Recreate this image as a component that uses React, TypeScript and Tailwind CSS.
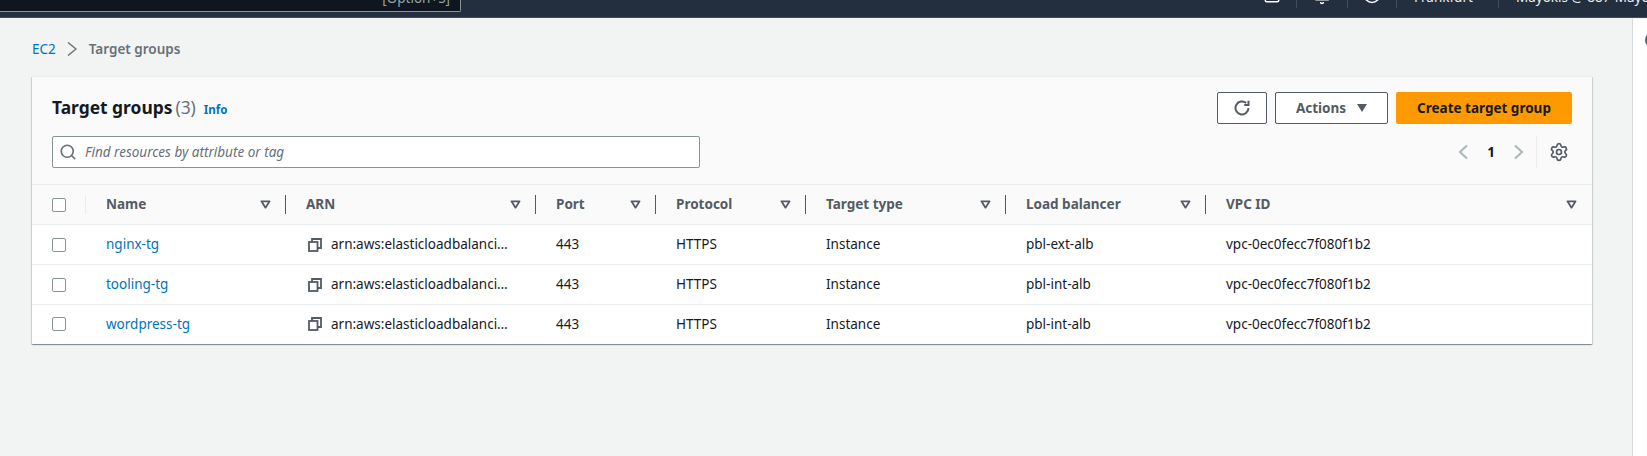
import { Bell, CircleHelp, Search, Settings, SquareTerminal } from "lucide-react";

interface TargetGroup {
  name: string;
  loadBalancer: string;
}

const targetGroups: TargetGroup[] = [
  { name: "nginx-tg", loadBalancer: "pbl-ext-alb" },
  { name: "tooling-tg", loadBalancer: "pbl-int-alb" },
  { name: "wordpress-tg", loadBalancer: "pbl-int-alb" },
];

const columns = ["Name", "ARN", "Port", "Protocol", "Target type", "Load balancer"];

function SortIcon() {
  return (
    <svg width="11" height="9" viewBox="0 0 12 10" fill="none" className="shrink-0">
      <path d="M1.5 1.5h9L6 8.5z" stroke="#545b64" strokeWidth="2" strokeLinejoin="round" />
    </svg>
  );
}

function CopyIcon() {
  return (
    <svg width="14" height="14" viewBox="0 0 14 14" fill="none" className="shrink-0" stroke="#545b64" strokeWidth="1.8">
      <rect x="1" y="4" width="8.5" height="9" />
      <path d="M4 4V1h9v9H9.5" />
    </svg>
  );
}

function Chevron({ flip }: { flip?: boolean }) {
  return (
    <svg width="10" height="16" viewBox="0 0 10 16" fill="none" className={flip ? "rotate-180" : ""}>
      <path d="M9 1.5 2 8l7 6.5" stroke="#aab7b8" strokeWidth="2" />
    </svg>
  );
}

function Checkbox() {
  return <div className="h-[14px] w-[14px] rounded-[2px] border border-[#879596] bg-white" />;
}

function TopBar() {
  return (
    <header className="flex h-[18px] justify-between overflow-hidden border-b border-[#414d5c] bg-[#232f3e] text-[13.5px] text-[#eaeded]">
      <div className="flex h-[12px] w-[461px] justify-end overflow-hidden rounded-br-[2px] border-r border-b border-[#879596] bg-[#0f1620] pr-[10px] text-[#95a5a6]">
        <span className="-mt-[12px] leading-5">[Option+S]</span>
      </div>
      <div className="flex">
        <div className="flex h-[8px] w-[50px] justify-center border-r border-[#414d5c]">
          <SquareTerminal size={18} className="-mt-[14px] text-white" />
        </div>
        <div className="flex h-[8px] w-[51px] justify-center border-r border-[#414d5c]">
          <Bell size={18} className="-mt-[13px] text-white" />
        </div>
        <div className="flex h-[8px] w-[49px] justify-center border-r border-[#414d5c]">
          <CircleHelp size={18} className="-mt-[14px] text-white" />
        </div>
        <div className="h-[8px] w-[102px] border-r border-[#414d5c] pl-[17px]">
          <div className="-mt-[13px] leading-5">Frankfurt</div>
        </div>
        <div className="h-[8px] w-[148px] pl-[17px]">
          <div className="-mt-[13px] leading-5 whitespace-nowrap">Mayokis @ 887-Mayor</div>
        </div>
      </div>
    </header>
  );
}

function CardHeader() {
  return (
    <div className="px-5 pt-[15px] pb-4">
      <div className="flex h-8 items-center justify-between">
        <div className="flex items-baseline pb-[2px]">
          <h1 className="text-[17.4px] leading-6 font-bold text-[#16191f]">Target groups</h1>
          <span className="ml-[3px] text-[17.4px] leading-6 text-[#687078]">(3)</span>
          <a className="ml-2 text-[11.5px] font-bold text-[#0073bb]">Info</a>
        </div>
        <div className="flex gap-2">
          <button type="button" className="flex h-8 w-[50px] items-center justify-center rounded-[2px] border border-[#545b64] bg-white">
            <svg width="16" height="16" viewBox="0 0 16 16" fill="none" stroke="#545b64" strokeWidth="2">
              <path d="M14.5 8a6.5 6.5 0 1 1-2.3-5" />
              <path d="M14.5 .8V5h-4.2" />
            </svg>
          </button>
          <button type="button" className="flex h-8 w-[113px] items-center justify-center gap-[11px] rounded-[2px] border border-[#545b64] bg-white text-[13.5px] font-bold text-[#545b64]">
            Actions
            <svg width="10" height="8" viewBox="0 0 10 8" fill="#545b64">
              <path d="M0 0h10L5 8z" />
            </svg>
          </button>
          <button type="button" className="h-8 w-[176px] rounded-[2px] bg-[#ff9900] text-[13.5px] font-bold text-[#16191f]">
            Create target group
          </button>
        </div>
      </div>
      <div className="mt-3 flex h-8 items-center justify-between">
        <div className="flex h-8 w-[648px] items-center gap-2 rounded-[2px] border border-[#879596] bg-white pl-[6px]">
          <Search size={18} strokeWidth={2.2} className="text-[#687078]" />
          <span className="pt-px text-[13.5px] text-[#687078] italic">Find resources by attribute or tag</span>
        </div>
        <div className="flex items-center">
          <Chevron />
          <span className="w-[46px] text-center text-[13.5px] font-bold text-[#16191f]">1</span>
          <Chevron flip />
          <div className="mr-3 ml-3 h-8 border-r border-[#eaeded]" />
          <Settings size={20} strokeWidth={2} className="mr-[3px] text-[#545b64]" />
        </div>
      </div>
    </div>
  );
}

function TargetGroupsTable() {
  return (
    <table className="w-full table-fixed border-collapse text-[13.5px]">
      <colgroup>
        <col className="w-[54px]" />
        <col className="w-[200px]" />
        <col className="w-[250px]" />
        <col className="w-[120px]" />
        <col className="w-[150px]" />
        <col className="w-[200px]" />
        <col className="w-[200px]" />
        <col />
      </colgroup>
      <thead>
        <tr className="h-10 border-y border-[#eaeded] bg-[#fafafa] text-left font-bold text-[#545b64]">
          <th className="p-0">
            <div className="flex h-[19px] items-center border-r border-[#eaeded] pl-5">
              <Checkbox />
            </div>
          </th>
          {columns.map((column) => (
            <th key={column} className="p-0 font-bold">
              <div className="flex h-[19px] items-center justify-between border-r border-[#545b64] pr-[14px] pl-5">
                {column}
                <SortIcon />
              </div>
            </th>
          ))}
          <th className="p-0 font-bold">
            <div className="flex h-[19px] items-center justify-between pr-[15px] pl-5">
              VPC ID
              <SortIcon />
            </div>
          </th>
        </tr>
      </thead>
      <tbody className="bg-white text-[#16191f]">
        {targetGroups.map((group) => (
          <tr key={group.name} className="h-10 border-b border-[#eaeded] last:h-[39px] last:border-b-0">
            <td className="pl-5">
              <Checkbox />
            </td>
            <td className="pl-5 text-[#0073bb]">{group.name}</td>
            <td className="pl-[22px]">
              <div className="flex items-center gap-[9px]">
                <CopyIcon />
                <span className="whitespace-nowrap">arn:aws:elasticloadbalanci…</span>
              </div>
            </td>
            <td className="pl-5">443</td>
            <td className="pl-5">HTTPS</td>
            <td className="pl-5">Instance</td>
            <td className="pl-5">{group.loadBalancer}</td>
            <td className="pl-5">vpc-0ec0fecc7f080f1b2</td>
          </tr>
        ))}
      </tbody>
    </table>
  );
}

export default function App() {
  return (
    <div className="flex h-[456px] flex-col overflow-hidden bg-[#f2f3f3] font-['Noto_Sans',sans-serif]">
      <TopBar />
      <div className="flex flex-1">
        <main className="flex-1 pt-[21px] pr-10 pl-8">
          <nav className="mb-[17px] flex h-5 items-center text-[13.5px]">
            <a className="text-[#0073bb]">EC2</a>
            <svg width="10" height="14" viewBox="0 0 10 14" fill="none" className="mr-3 ml-[11px]">
              <path d="M1 .5 9 7l-8 6.5" stroke="#687078" strokeWidth="1.4" />
            </svg>
            <span className="font-semibold text-[#687078]">Target groups</span>
          </nav>
          <section className="overflow-hidden rounded-t-[1px] border-t border-[#eaeded] bg-[#fafafa] shadow-[0_1px_1px_0_rgba(0,28,36,0.3),1px_1px_1px_0_rgba(0,28,36,0.15),-1px_1px_1px_0_rgba(0,28,36,0.15)]">
            <CardHeader />
            <TargetGroupsTable />
          </section>
        </main>
        <aside className="mt-px w-[15px] overflow-hidden border-l border-[#d5dbdb] bg-white pt-[13px] pl-[12px]">
          <div className="h-4 w-4 rounded-full border-2 border-[#545b64]" />
        </aside>
      </div>
    </div>
  );
}
